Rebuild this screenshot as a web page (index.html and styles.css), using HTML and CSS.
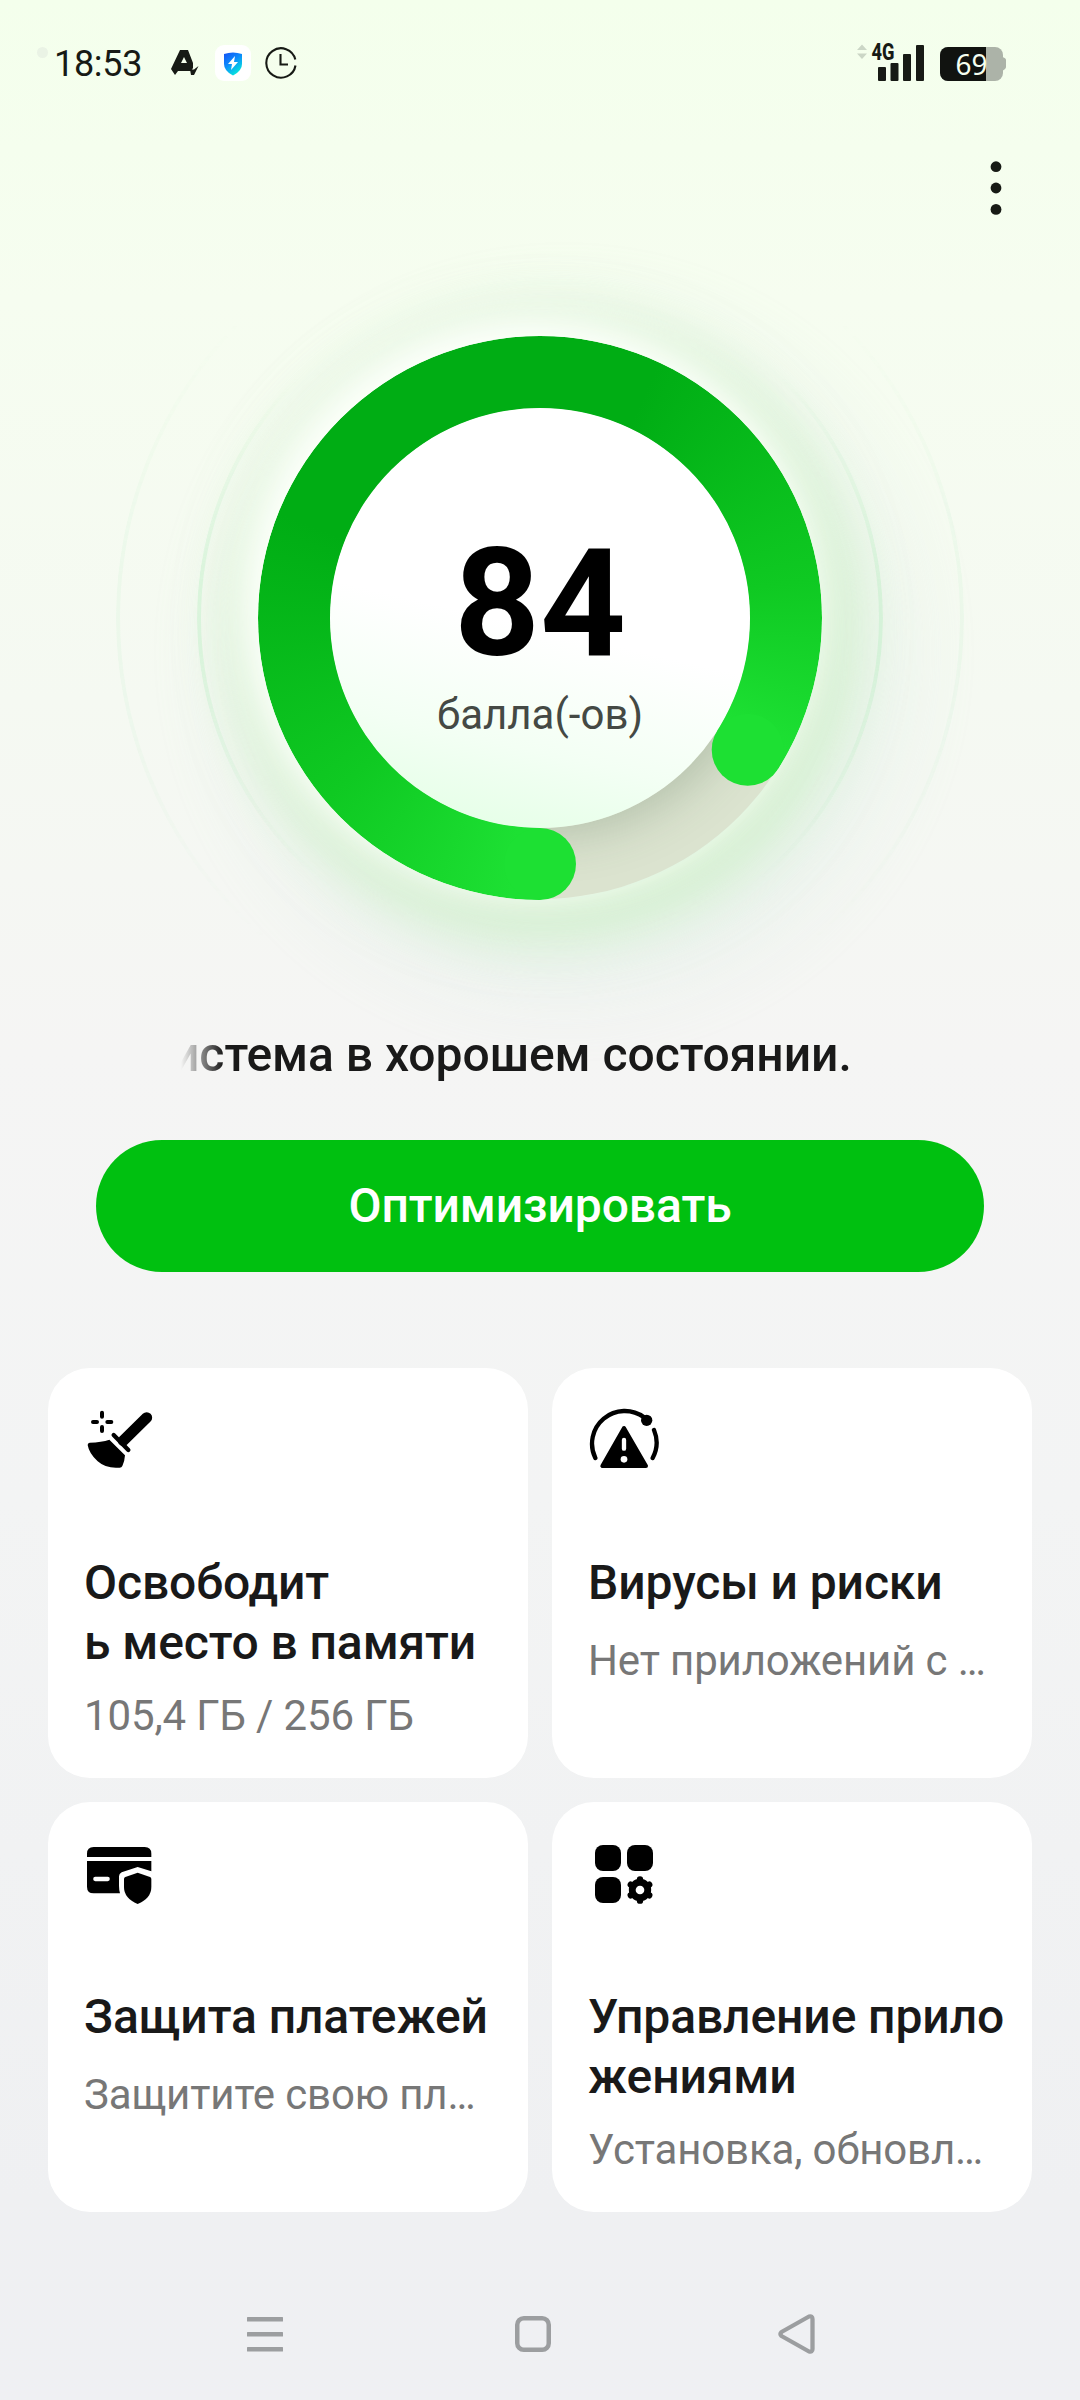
FILE: index.html
```html
<!DOCTYPE html>
<html lang="ru">
<head>
<meta charset="utf-8">
<title>Диспетчер телефона</title>
<link rel="stylesheet" href="styles.css">
</head>
<body>
<div class="screen">
  <header class="status">
    <div class="status-left">
      <span class="privacy-dot"></span>
      <span class="time">18:53</span>
      <svg class="ic-a" width="28" height="26" viewBox="0 0 28 26"><path fill="#171a15" fill-rule="evenodd" d="M9 0h8l5 13v5l-2 3H7l-3 4-4-6zM13 7l-3 6h6z"/><path fill="#171a15" d="M19 19.500h4l4.500-3.500-4.500 9h-3z"/></svg>
      <svg class="ic-shield" width="36" height="36" viewBox="0 0 36 36"><defs><linearGradient id="sh" x1="0" y1="0" x2=".6" y2="1"><stop offset="0" stop-color="#1450f5"/><stop offset=".5" stop-color="#0c8dfb"/><stop offset="1" stop-color="#05e6dc"/></linearGradient></defs><rect width="36" height="36" rx="9" fill="#fff"/><path fill="url(#sh)" d="M9 9q9-3 18 0v10q0 7-9 11.500Q9 26 9 19z"/><path fill="#fff" d="M20 11l-7 8h4l-1 6 7-8h-4z"/></svg>
      <svg class="ic-clock" width="32" height="32" viewBox="0 0 32 32" fill="none" stroke="#171a15" stroke-width="2.100"><path d="M30.300 12.500A14.700 14.700 0 1 0 30.500 18.500"/><path d="M15.500 7v10.500H23"/></svg>
    </div>
    <div class="status-right">
      <svg width="68" height="54" viewBox="857 34 68 54"><path fill="#cbd6c6" d="M857 50l5-5.500 5 5.500zM857 53.500h10l-5 5.500z"/><text x="871.500" y="60" class="net" textLength="23" lengthAdjust="spacingAndGlyphs">4G</text><g fill="#171a15"><rect x="878" y="67" width="8" height="14" rx="1"/><rect x="890.500" y="63" width="8" height="18" rx="1"/><rect x="903" y="54" width="8" height="27" rx="1"/><rect x="916" y="45" width="8" height="36" rx="1"/></g></svg>
      <svg width="66" height="54" viewBox="0 -10 66 54"><defs><clipPath id="bt"><rect width="63" height="34" rx="8"/></clipPath></defs><path fill="#acb3a8" d="M62 10q4 1 4 3v7q0 2-4 4z"/><g clip-path="url(#bt)"><rect width="63" height="34" fill="#acb3a8"/><rect width="46" height="34" fill="#111310"/></g><text x="15.500" y="28" class="pct" textLength="32" lengthAdjust="spacingAndGlyphs">69</text></svg>
    </div>
  </header>
  <div class="toolbar">
    <svg width="12" height="54" viewBox="0 0 12 54" fill="#171a15"><circle cx="6" cy="5.700" r="5.400"/><circle cx="6" cy="27" r="5.400"/><circle cx="6" cy="48.400" r="5.400"/></svg>
  </div>
  <main>
    <section class="gauge">
      <div class="halo"></div>
      <div class="halo halo-outer"></div>
      <div class="track"><div class="disc-shadow"></div></div>
      <div class="arc"></div>
      <svg class="caps" viewBox="258 336 564 564"><circle cx="540" cy="864" r="36" fill="#1de033"/><circle cx="747.700" cy="749.800" r="36" fill="#1de033"/></svg>
      <div class="disc">
        <div class="score">84</div>
        <div class="unit">балла(-ов)</div>
      </div>
    </section>
    <p class="state">истема в хорошем состоянии.</p>
    <button class="optimize">Оптимизировать</button>
    <section class="cards">
      <article class="card">
        <svg class="icon" viewBox="132 162 216 216"><g stroke="#000" stroke-width="12" stroke-linecap="round"><path d="M186 188v12M186 231v12M159 216h12M202 216h12"/><path d="M221 255l44 45" stroke-width="13"/></g><path d="M250 272L320 203" stroke="#000" stroke-width="33" stroke-linecap="round"/><path d="M236 263l26 26-12-8z"/><path d="M149 278q36-1 59-9l47 47q-1 18-8 32-2 5-8 5-40 4-66-19-26-24-30-49 0-6 6-7z"/></svg>
        <h2>Освободит<br>ь место в памяти</h2>
        <p class="sub">105,4 ГБ / 256 ГБ</p>
      </article>
      <article class="card">
        <svg class="icon" viewBox="144 162 216 216"><g fill="none" stroke="#000" stroke-width="13" stroke-linecap="round"><path d="M166 324A98 98 0 0 1 312 202M342 240A98 98 0 0 1 338 324"/></g><circle cx="320" cy="211" r="17"/><path d="M252 234L187 348h131z" stroke="#000" stroke-width="12" stroke-linejoin="round"/><path d="M252 270v26" stroke="#fff" stroke-width="13" stroke-linecap="round"/><circle cx="252" cy="328" r="10" fill="#fff"/></svg>
        <h2>Вирусы и риски</h2>
        <p class="sub sub-single">Нет приложений с …</p>
      </article>
      <article class="card">
        <svg class="icon" viewBox="132 144 216 216"><path d="M141 201v-10q0-20 20-20h153q20 0 20 20v10zM141 213h193v31l-41-13-48 16q-8 4-8 12v28q0 12 3 23h-79q-20 0-20-20z"/><path d="M166 267h37" stroke="#fff" stroke-width="13" stroke-linecap="round"/><path d="M293 248l37 13q4 2 4 6v24q0 34-41 51-41-17-41-51v-24q0-4 4-6z"/></svg>
        <h2>Защита платежей</h2>
        <p class="sub sub-single">Защитите свою пл…</p>
      </article>
      <article class="card">
        <svg class="icon" viewBox="144 144 216 216"><rect x="165" y="165" width="78" height="78" rx="24"/><rect x="261" y="165" width="78" height="78" rx="24"/><rect x="165" y="261" width="78" height="78" rx="24"/><circle cx="300" cy="300" r="23" fill="none" stroke="#000" stroke-width="21"/><g stroke="#000" stroke-width="19" stroke-linecap="round"><path d="M300 268v64M272.300 284l55.400 32M272.300 316l55.400-32"/></g><circle cx="300" cy="300" r="13" fill="#fff"/></svg>
        <h2>Управление прило<br>жениями</h2>
        <p class="sub">Установка, обновл…</p>
      </article>
    </section>
  </main>
  <nav class="nav">
    <svg width="36" height="36" viewBox="0 0 36 36" fill="#9c9ea0"><rect y="1" width="36" height="4.500" rx=".5"/><rect y="16" width="36" height="4.500" rx=".5"/><rect y="31" width="36" height="4.500" rx=".5"/></svg>
    <svg width="36" height="36" viewBox="0 0 36 36" fill="none" stroke="#9c9ea0" stroke-width="4.500"><rect x="2.250" y="2.250" width="31.500" height="31.500" rx="6.500"/></svg>
    <svg width="37" height="40" viewBox="0 0 37 40" fill="none" stroke="#9c9ea0" stroke-width="4.300" stroke-linejoin="round"><path d="M3.500 18Q1.500 20 3.500 22L31 37.500Q34.500 38.500 34.500 35V5Q34.500 1.500 31 2.500z"/></svg>
  </nav>
</div>
</body>
</html>
```
FILE: styles.css
```css
* { box-sizing: border-box; margin: 0; padding: 0; }
body { font-family: Roboto, "Noto Sans", sans-serif; color: #191919; }
svg { display: block; flex: none; }
.screen {
  width: 1080px; height: 2400px; overflow: hidden;
  display: flex; flex-direction: column;
  background: linear-gradient(180deg, #f4ffec 0, #f6fdf0 300px, #f5f9f2 700px, #f5f5f4 1050px, #f3f4f4 1500px, #f1f2f3 1850px, #eff0f2 2200px, #eff0f3 2400px);
}
.status { height: 126px; flex: none; display: flex; justify-content: space-between; padding: 0 74px 0 37px; }
.status-left, .status-right { display: flex; align-items: flex-start; }
.privacy-dot { width: 11px; height: 11px; border-radius: 50%; background: #eaf3e5; margin-top: 47px; }
.time { width: 91px; margin: 43px 0 0 6px; font-size: 36px; line-height: 42px; letter-spacing: -.3px; color: #171a15; white-space: nowrap; }
.ic-a { margin: 50px 0 0 26px; }
.ic-shield { margin: 45px 0 0 16px; }
.ic-clock { margin: 47px 0 0 14px; }
.status-right svg { margin-top: 34px; }
.status-right svg + svg { margin: 37px 0 0 15px; }
.net { font-size: 23px; font-weight: 800; fill: #171a15; }
.pct { font-family: "Noto Sans", sans-serif; font-size: 29px; fill: #f6fff0; }
.toolbar { height: 210px; flex: none; display: flex; justify-content: flex-end; padding: 35px 78px 0 0; }

.gauge { position: relative; width: 564px; height: 564px; margin: 0 auto; }
.gauge > * { position: absolute; border-radius: 50%; }
.halo {
  inset: -61px; border: 4px solid rgba(160, 235, 175, .26);
  -webkit-mask: linear-gradient(180deg, transparent 15%, #000 45%, #000 55%, transparent 88%);
  mask: linear-gradient(180deg, transparent 15%, #000 45%, #000 55%, transparent 88%);
}
.halo-outer { inset: -142px; border-color: rgba(160, 235, 175, .1); }
.track {
  inset: 1px; background: #dbe3cf; overflow: hidden;
}
.gauge::before {
  content: ""; position: absolute; inset: 10px; border-radius: 50%;
  box-shadow: -9px -12px 34px 18px #fdfffb, 2px 8px 46px 46px rgba(200, 240, 190, .52), 24px 34px 90px 56px rgba(222, 238, 228, .6);
}
.disc-shadow { width: 420px; height: 420px; margin: 71px; border-radius: 50%; box-shadow: 8px 0 46px 8px rgba(70, 100, 70, .25); }
.arc {
  inset: 0;
  background: conic-gradient(from 180deg, #1de033 0deg, #1de033 6deg, #0fc922 50deg, #00ad14 112deg, #00ad14 205deg, #0fc922 262deg, #1de033 298deg, #1de033 302.400deg, transparent 302.400deg);
  -webkit-mask: radial-gradient(circle, transparent 209px, #000 210px);
  mask: radial-gradient(circle, transparent 209px, #000 210px);
}
.caps { inset: 0; width: 564px; height: 564px; }
.disc {
  inset: 72px; text-align: center;
  background: linear-gradient(193deg, #fff 52%, #f3fff4 76%, #e2ffe4 98%);
}
.score { margin-top: 108px; font-size: 150px; line-height: 176px; font-weight: 700; color: #000; }
.unit { font-size: 42px; line-height: 50px; margin-top: -2px; color: #444944; }
.state {
  width: 718px; margin: 124.600px 0 0 181px; font-size: 48px; line-height: 60px; font-weight: 500; white-space: nowrap;
  text-indent: -9px; letter-spacing: -.05px;
  -webkit-mask: linear-gradient(90deg, transparent 0, #000 42px);
  mask: linear-gradient(90deg, transparent 0, #000 42px);
}
.optimize {
  display: block; width: 888px; height: 132px; margin: 55.400px auto 0; border: 0; border-radius: 66px;
  background: #00c010; color: #fff; font: 500 48px/60px Roboto, sans-serif; letter-spacing: -.1px;
}
.cards { display: grid; grid-template-columns: 480px 480px; grid-auto-rows: 410px; gap: 24px; margin: 96px 48px 0; }
.card { background: #fff; border-radius: 42px; padding: 36px 0 0 36px; white-space: nowrap; }
.icon { width: 72px; height: 72px; }
h2 { margin-top: 76.600px; font-size: 48px; line-height: 60px; font-weight: 500; letter-spacing: -.1px; }
.sub { margin-top: 18px; font-size: 42px; line-height: 50px; letter-spacing: -.14px; color: #777; }
.sub-single { margin-top: 23px; }
.nav { flex: 1; display: flex; align-items: flex-start; padding: 104px 0 0 247px; }
.nav svg + svg { margin-left: 232px; }
.nav svg:last-child { margin: -2px 0 0 227px; }
```
